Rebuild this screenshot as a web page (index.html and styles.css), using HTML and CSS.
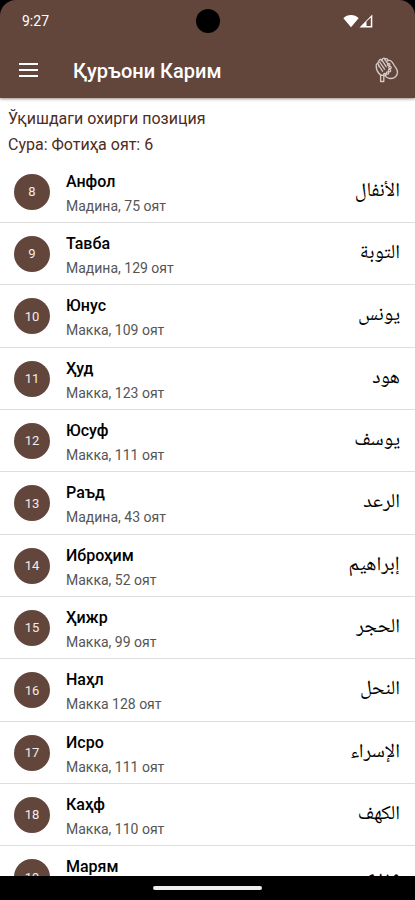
FILE: index.html
```html
<!DOCTYPE html>
<html lang="uz-Cyrl">
<head>
<meta charset="utf-8">
<meta name="viewport" content="width=device-width, initial-scale=1">
<title>Қуръони Карим</title>
<link rel="stylesheet" href="styles.css">
</head>
<body>
<div class="screen">
  <header class="top">
    <div class="status">
      <span class="clock">9:27</span>
      <span class="camera"></span>
      <span class="signals">
        <svg width="16" height="14" viewBox="0 0 16 14" aria-hidden="true"><path d="M8 13.300.4 4.200C2.500 2 5 .900 8 .900s5.500 1.100 7.600 3.300z" fill="#fff"/></svg>
        <svg width="14" height="14" viewBox="0 0 14 14" aria-hidden="true"><path d="M13.300.600V13.400H.500z" fill="#fff"/><path d="M7.500 7.400 11.800 3.600V12H7.500z" fill="#62463c"/></svg>
      </span>
    </div>
    <div class="bar">
      <button class="icon-button" type="button" aria-label="Меню">
        <svg width="20" height="16" viewBox="0 0 20 16" aria-hidden="true"><path d="M0 2h19M0 8h19M0 14h19" stroke="#fff" stroke-width="2"/></svg>
      </button>
      <h1 class="title">Қуръони Карим</h1>
      <button class="icon-button" type="button" aria-label="Дуо">
        <svg width="24" height="28" viewBox="0 -1 24 28" fill="none" stroke="#d6cac5" stroke-width="1.300" stroke-linecap="round" stroke-linejoin="round" aria-hidden="true">
          <path d="M4.500 17C2 14.500.900 11 1.300 7.700c.2-1.500 1.900-1.500 2.200-.2L4 9.500M2.600 6.400 4.500 3c.7-1.200 2.400-.5 2 .8M6.300 3.200 8 1.500c1-.9 2.500.1 1.900 1.300M9.900 2.300c1.200-1.300 3.200-.5 2.600 1L11.700 5"/>
          <path d="m4.200 9 3.400 5.200M4.700 5l4.800 7.200M7 3.200l4.200 6.500M10 2.500l3.200 5"/>
          <path d="M4.500 17c1.500 1.700 4.600 1.900 6.500.5M5.600 18v6.500h3.200V18.300"/>
          <circle cx="13.700" cy="7.600" r="1.200"/><circle cx="15" cy="10.500" r="1.200"/><circle cx="14.500" cy="13.600" r="1.200"/><circle cx="12.500" cy="16" r="1.200"/><circle cx="9.800" cy="17.500" r="1.200"/>
          <path d="M13.500 3.500c2.500-.6 4.200 2 5.500 4.500 1.800 3 3.500 4.300 3.500 7.300 0 3.500-3 6.200-6.500 6.200-2.600 0-4.600-1-5.500-2.500"/>
        </svg>
      </button>
    </div>
  </header>
  <main class="content">
    <a class="last" href="#fotiha">Ўқишдаги охирги позиция<br>Сура: Фотиҳа оят: 6</a>
    <ul class="list">
      <li class="row"><span class="num">8</span><span class="info"><b class="name">Анфол</b><span class="meta">Мадина, 75 оят</span></span><span class="arabic" lang="ar" dir="rtl">الأنفال</span></li>
      <li class="row"><span class="num">9</span><span class="info"><b class="name">Тавба</b><span class="meta">Мадина, 129 оят</span></span><span class="arabic" lang="ar" dir="rtl">التوبة</span></li>
      <li class="row"><span class="num">10</span><span class="info"><b class="name">Юнус</b><span class="meta">Макка, 109 оят</span></span><span class="arabic" lang="ar" dir="rtl">يونس</span></li>
      <li class="row"><span class="num">11</span><span class="info"><b class="name">Ҳуд</b><span class="meta">Макка, 123 оят</span></span><span class="arabic" lang="ar" dir="rtl">هود</span></li>
      <li class="row"><span class="num">12</span><span class="info"><b class="name">Юсуф</b><span class="meta">Макка, 111 оят</span></span><span class="arabic" lang="ar" dir="rtl">يوسف</span></li>
      <li class="row"><span class="num">13</span><span class="info"><b class="name">Раъд</b><span class="meta">Мадина, 43 оят</span></span><span class="arabic" lang="ar" dir="rtl">الرعد</span></li>
      <li class="row"><span class="num">14</span><span class="info"><b class="name">Иброҳим</b><span class="meta">Макка, 52 оят</span></span><span class="arabic" lang="ar" dir="rtl">إبراهيم</span></li>
      <li class="row"><span class="num">15</span><span class="info"><b class="name">Ҳижр</b><span class="meta">Макка, 99 оят</span></span><span class="arabic" lang="ar" dir="rtl">الحجر</span></li>
      <li class="row"><span class="num">16</span><span class="info"><b class="name">Наҳл</b><span class="meta">Макка 128 оят</span></span><span class="arabic" lang="ar" dir="rtl">النحل</span></li>
      <li class="row"><span class="num">17</span><span class="info"><b class="name">Исро</b><span class="meta">Макка, 111 оят</span></span><span class="arabic" lang="ar" dir="rtl">الإسراء</span></li>
      <li class="row"><span class="num">18</span><span class="info"><b class="name">Каҳф</b><span class="meta">Макка, 110 оят</span></span><span class="arabic" lang="ar" dir="rtl">الكهف</span></li>
      <li class="row"><span class="num">19</span><span class="info"><b class="name">Марям</b><span class="meta">Макка, 98 оят</span></span><span class="arabic" lang="ar" dir="rtl">مريم</span></li>
    </ul>
  </main>
  <footer class="nav"><span class="pill"></span></footer>
</div>
</body>
</html>
```
FILE: styles.css
```css
* { box-sizing: border-box; }

body {
  margin: 0;
  background: #000;
  font-family: Roboto, "Noto Sans", sans-serif;
}

.screen {
  display: flex;
  flex-direction: column;
  height: 100vh;
  overflow: hidden;
}

.top {
  position: relative;
  z-index: 1;
  flex: none;
  color: #fff;
  background: #62463c;
  border-radius: 16px 16px 0 0;
  box-shadow: 0 1px 3px rgba(60, 30, 20, 0.5);
}

.status {
  display: grid;
  grid-template-columns: 1fr auto 1fr;
  align-items: center;
  height: 42px;
  padding: 0 42px 0 22px;
}

.clock { font-size: 14px; }

.camera {
  width: 24px;
  height: 24px;
  margin-left: 20px;
  border-radius: 50%;
  background: #000;
}

.signals {
  display: flex;
  justify-content: flex-end;
}

.bar {
  display: flex;
  align-items: center;
  height: 56px;
  padding: 0 16px;
}

.icon-button {
  display: flex;
  flex: none;
  padding: 0 3px;
  border: 0;
  background: none;
}

.icon-button:last-child { padding: 0; }

.title {
  flex: 1;
  margin: 0;
  padding: 2px 0 0 31px;
  font-size: 20px;
  font-weight: 500;
  line-height: 24px;
}

.content {
  flex: 1;
  min-height: 0;
  overflow: hidden;
  background: #fff;
}

.last {
  display: block;
  padding: 8px 8px 3px;
  color: #4e2c22;
  font-size: 16px;
  line-height: 26px;
  text-decoration: none;
}

.list {
  display: grid;
  grid-auto-rows: 62px 62px 63px;
  margin: 0;
  padding: 0;
  list-style: none;
}

.row {
  display: flex;
  align-items: center;
  padding: 0 15px 0 14px;
  border-bottom: 1px solid #dedede;
}

.num {
  display: grid;
  place-items: center;
  flex: none;
  width: 36px;
  height: 36px;
  border-radius: 50%;
  color: #f3ece9;
  background: #62463c;
  font-size: 13px;
}

.info {
  display: flex;
  flex: 1;
  flex-direction: column;
  padding: 4px 0 0 16px;
  line-height: 24px;
}

.name {
  color: #000;
  font-size: 16px;
  font-weight: 500;
}

.meta {
  color: #555;
  font-size: 14px;
}

.arabic {
  color: #000;
  font-family: "Noto Naskh Arabic UI", "Noto Naskh Arabic", "DejaVu Sans", sans-serif;
  font-size: 20px;
  line-height: 32px;
}

.nav {
  display: flex;
  flex: none;
  align-items: center;
  justify-content: center;
  height: 24px;
  background: #000;
}

.pill {
  width: 109px;
  height: 4px;
  border-radius: 2px;
  background: #eee;
}
```
